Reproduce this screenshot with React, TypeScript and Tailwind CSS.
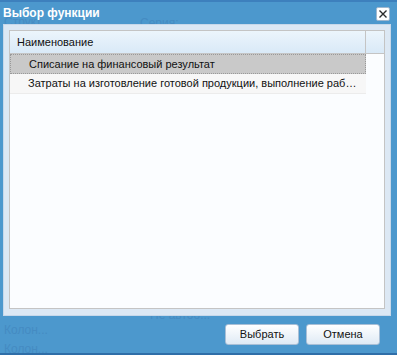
import React from "react";

const font = { fontFamily: '"Liberation Sans", Arial, sans-serif' };

export default function App() {
  return (
    <div
      className="relative w-[397px] h-[355px] overflow-hidden bg-[#4c98cd] flex flex-col border-t-2 border-t-[#3d80bd] border-b-2 border-b-[#2f6ea8]"
      style={font}
    >
      {/* faint background content seen through the window */}
      <span className="absolute left-[4px] top-[11px] text-[12px] text-[#458bc2]">Структ...</span>
      <span className="absolute left-[140px] top-[12px] text-[12px] text-[#458bc2]">Серия:</span>
      <span className="absolute left-[150px] top-[304px] text-[12px] text-[#458bc2]">Не автоо...</span>
      <span className="absolute left-[4px] top-[319px] text-[12px] text-[#458bc2]">Колон...</span>
      <span className="absolute left-[4px] top-[338px] text-[12px] text-[#458bc2]">Колон...</span>

      {/* title bar */}
      <div className="relative h-[22px] flex items-center justify-between pl-[3px] pr-[7px]">
        <span className="text-[12px] font-bold text-white">Выбор функции</span>
        <div className="w-[14px] h-[14px] mt-[2px] rounded-[2px] bg-white border border-[#9fb8cf] flex items-center justify-center">
          <svg width="10" height="10" viewBox="0 0 10 10">
            <path d="M1.5 1.5 L8.5 8.5 M8.5 1.5 L1.5 8.5" stroke="#2b2b2b" strokeWidth="1.4" />
          </svg>
        </div>
      </div>

      {/* body panel */}
      <div className="relative mx-[3px] mr-[6px] h-[292px] bg-[#dce8f4] border border-[#c7d8ea] pt-[5px] pl-[5px] pr-[5px] pb-[6px]">
        <div className="w-full h-full bg-[#fbfdff] border border-[#c4c4c4] flex flex-col">
          {/* header */}
          <div className="flex h-[23px] border-b border-[#c4c4c4] bg-gradient-to-b from-[#ecf5fc] to-[#d9e9f7]">
            <div className="w-[356px] border-r border-[#c4c4c4] flex items-center pl-[7px] text-[11px] text-[#111]">
              Наименование
            </div>
            <div className="flex-1" />
          </div>
          {/* rows */}
          <div className="w-[356px] h-[20px] bg-[#c9c9c9] border border-dotted border-[#999] flex items-center pl-[18px] text-[11px] text-[#111]">
            Списание на финансовый результат
          </div>
          <div className="w-[356px] h-[20px] bg-[#f7f7f7] border-b border-[#ececec] flex items-center pl-[18px] pr-[8px] text-[11px] text-[#111]">
            <span className="truncate">Затраты на изготовление готовой продукции, выполнение работ, оказание услуг</span>
          </div>
        </div>
      </div>

      {/* footer */}
      <div className="relative flex justify-end gap-[7px] pr-[17px] mt-[8px]">
        <button className="w-[74px] h-[21px] rounded-[3px] border border-[#a9bfd6] bg-gradient-to-b from-[#ffffff] to-[#dfeaf5] text-[11px] text-[#111]">
          Выбрать
        </button>
        <button className="w-[74px] h-[21px] rounded-[3px] border border-[#a9bfd6] bg-gradient-to-b from-[#ffffff] to-[#dfeaf5] text-[11px] text-[#111]">
          Отмена
        </button>
      </div>
    </div>
  );
}
